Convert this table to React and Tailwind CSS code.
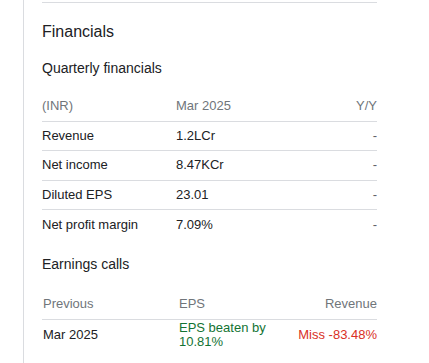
import React from 'react';

const Financials = () => {
  const rows = [
    { label: 'Revenue', value: '1.2LCr', change: '-' },
    { label: 'Net income', value: '8.47KCr', change: '-' },
    { label: 'Diluted EPS', value: '23.01', change: '-' },
    { label: 'Net profit margin', value: '7.09%', change: '-' },
  ];

  return (
    <div className="w-[429px] h-[363px] bg-white flex overflow-hidden font-['Liberation_Sans',Arial,sans-serif] text-[#202124]">
      <div className="w-[23px] shrink-0" />
      <div className="border-l border-[#dadce0] pl-[18px]">
        <div className="w-[335px]">
          <div className="mt-[2px] h-px bg-[#dadce0]" />

          <h2 className="mt-[17px] text-[16px] leading-[24px]">Financials</h2>
          <h3 className="mt-[14px] text-[14px] leading-[20px]">Quarterly financials</h3>

          <div className="mt-[20px] text-[13px] leading-[16px]">
            <div className="grid grid-cols-[134px_1fr_80px] pb-[7px] border-b border-[#dadce0] text-[#70757a]">
              <span>(INR)</span>
              <span>Mar 2025</span>
              <span className="text-right">Y/Y</span>
            </div>
            {rows.map((row, index) => (
              <div
                key={index}
                className={`grid grid-cols-[134px_1fr_80px] items-center h-[29.33px] ${
                  index < rows.length - 1 ? 'border-b border-[#dadce0]' : ''
                }`}
              >
                <span>{row.label}</span>
                <span>{row.value}</span>
                <span className="text-right text-[#5f6368]">{row.change}</span>
              </div>
            ))}
          </div>

          <h3 className="mt-[15px] text-[14px] leading-[20px]">Earnings calls</h3>

          <div className="mt-[22px] text-[13px] leading-[16px] pl-px">
            <div className="grid grid-cols-[136px_110px_1fr] pb-[7px] border-b border-[#dadce0] -ml-px pl-px text-[#70757a]">
              <span>Previous</span>
              <span>EPS</span>
              <span className="text-right">Revenue</span>
            </div>
            <div className="grid grid-cols-[136px_110px_1fr] items-center h-[29px]">
              <span>Mar 2025</span>
              <span className="text-[#137333] leading-[14px]">EPS beaten by 10.81%</span>
              <span className="text-right text-[#d93025]">Miss -83.48%</span>
            </div>
          </div>
        </div>
      </div>
    </div>
  );
};

export default Financials;
